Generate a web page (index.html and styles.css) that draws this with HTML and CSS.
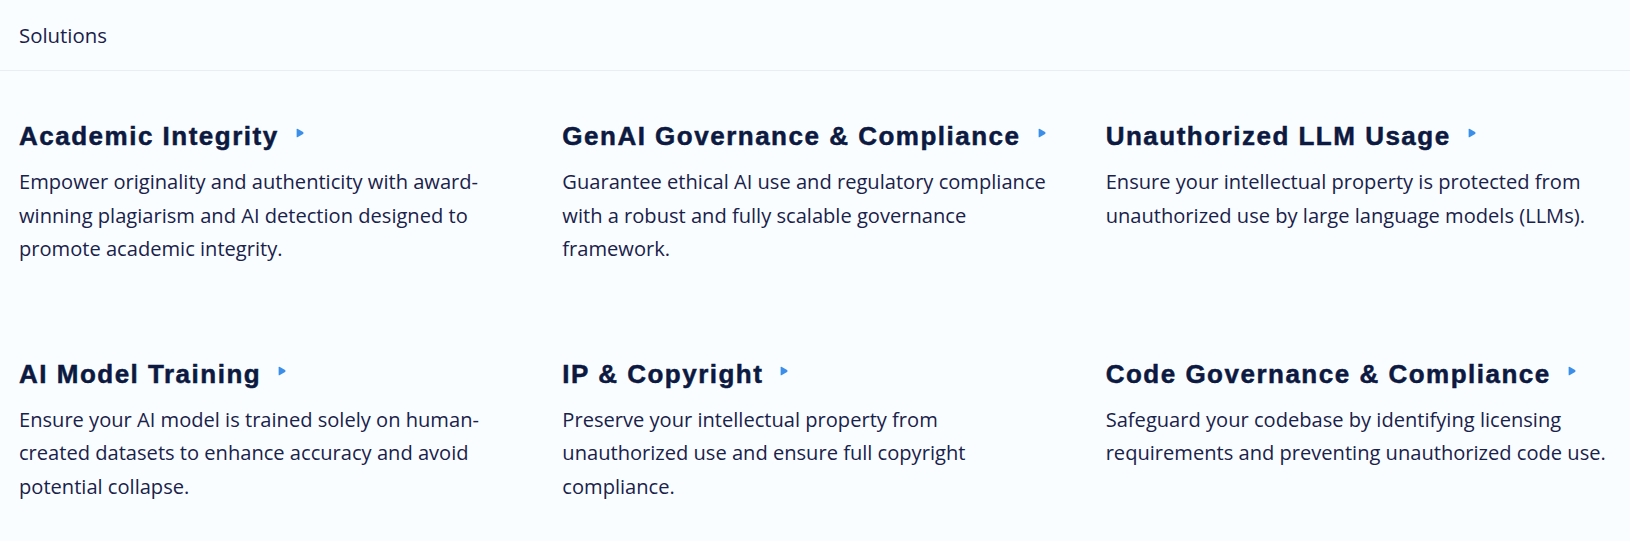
FILE: index.html
```html
<!DOCTYPE html>
<html lang="en">
<head>
<meta charset="utf-8">
<title>Solutions</title>
<link rel="stylesheet" href="styles.css">
</head>
<body>
<header class="topbar">
  <span class="topbar-title">Solutions</span>
</header>
<main class="solutions">
  <section class="card">
    <h3 class="card-title">Academic Integrity <svg class="arrow" width="8" height="10" viewBox="0 0 8 10"><path d="M0.6 1.6 Q0.6 0.2 1.9 0.9 L7.1 4.1 Q8 5 7.1 5.9 L1.9 9.1 Q0.6 9.8 0.6 8.4 Z"/></svg></h3>
    <p class="card-text">Empower originality and authenticity with award-winning plagiarism and AI detection designed to promote academic integrity.</p>
  </section>
  <section class="card">
    <h3 class="card-title">GenAI Governance &amp; Compliance <svg class="arrow" width="8" height="10" viewBox="0 0 8 10"><path d="M0.6 1.6 Q0.6 0.2 1.9 0.9 L7.1 4.1 Q8 5 7.1 5.9 L1.9 9.1 Q0.6 9.8 0.6 8.4 Z"/></svg></h3>
    <p class="card-text">Guarantee ethical AI use and regulatory compliance with a robust and fully scalable governance framework.</p>
  </section>
  <section class="card">
    <h3 class="card-title">Unauthorized LLM Usage <svg class="arrow" width="8" height="10" viewBox="0 0 8 10"><path d="M0.6 1.6 Q0.6 0.2 1.9 0.9 L7.1 4.1 Q8 5 7.1 5.9 L1.9 9.1 Q0.6 9.8 0.6 8.4 Z"/></svg></h3>
    <p class="card-text">Ensure your intellectual property is protected from unauthorized use by large language models (LLMs).</p>
  </section>
  <section class="card">
    <h3 class="card-title">AI Model Training <svg class="arrow" width="8" height="10" viewBox="0 0 8 10"><path d="M0.6 1.6 Q0.6 0.2 1.9 0.9 L7.1 4.1 Q8 5 7.1 5.9 L1.9 9.1 Q0.6 9.8 0.6 8.4 Z"/></svg></h3>
    <p class="card-text">Ensure your AI model is trained solely on human-created datasets to enhance accuracy and avoid potential collapse.</p>
  </section>
  <section class="card">
    <h3 class="card-title">IP &amp; Copyright <svg class="arrow" width="8" height="10" viewBox="0 0 8 10"><path d="M0.6 1.6 Q0.6 0.2 1.9 0.9 L7.1 4.1 Q8 5 7.1 5.9 L1.9 9.1 Q0.6 9.8 0.6 8.4 Z"/></svg></h3>
    <p class="card-text">Preserve your intellectual property from unauthorized use and ensure full copyright compliance.</p>
  </section>
  <section class="card">
    <h3 class="card-title">Code Governance &amp; Compliance <svg class="arrow" width="8" height="10" viewBox="0 0 8 10"><path d="M0.6 1.6 Q0.6 0.2 1.9 0.9 L7.1 4.1 Q8 5 7.1 5.9 L1.9 9.1 Q0.6 9.8 0.6 8.4 Z"/></svg></h3>
    <p class="card-text">Safeguard your codebase by identifying licensing requirements and preventing unauthorized code use.</p>
  </section>
</main>
</body>
</html>
```

FILE: styles.css
```css
* { box-sizing: border-box; }

html, body {
  margin: 0;
  padding: 0;
  background: #fafdff;
}

body {
  font-family: "Open Sans", "Noto Sans", sans-serif;
  color: #19224a;
}

.topbar {
  height: 71px;
  display: flex;
  align-items: center;
  padding: 0 19px 1px;
  border-bottom: 1px solid #e8eef2;
}

.topbar-title {
  font-size: 20.4px;
  color: #19224a;
}

.solutions {
  display: grid;
  grid-template-columns: repeat(3, 1fr);
  column-gap: 38px;
  row-gap: 92px;
  padding: 49px 19px 0;
}

.card-title {
  margin: 0;
  display: flex;
  align-items: flex-start;
  font-family: "Liberation Sans", Arial, sans-serif;
  font-weight: 700;
  font-size: 26px;
  line-height: 32px;
  letter-spacing: 1.5px;
  -webkit-text-stroke: 0.5px #0c1940;
  color: #0c1940;
  white-space: nowrap;
}

.arrow {
  flex: none;
  margin-left: 17px;
  margin-top: 8px;
  fill: #3c8fe9;
}

.card-text {
  margin: 13px 0 0;
  font-size: 20.1px;
  line-height: 33.5px;
  color: #19224a;
}
```
